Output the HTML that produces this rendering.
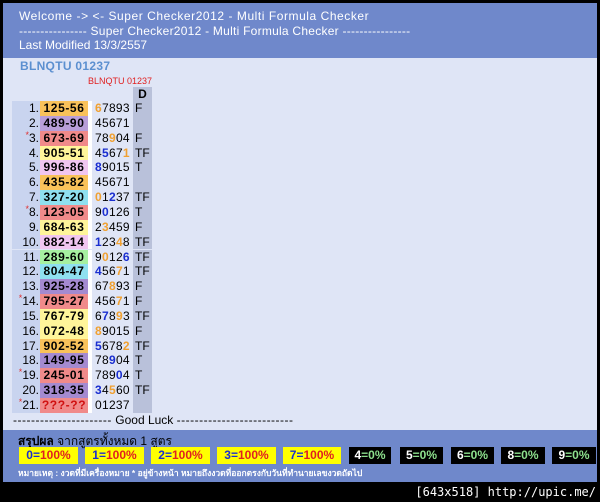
<!DOCTYPE html>
<html><head><meta charset="utf-8"><style>
*{margin:0;padding:0;box-sizing:border-box}
body{width:600px;height:502px;background:#000;position:relative;overflow:hidden;font-family:"Liberation Sans","DejaVu Sans","Noto Sans CJK SC",sans-serif;font-size:12px}
.frame{position:absolute;left:3px;top:3px;width:594px;height:479px;background:#dfe5f6}
.hdr{position:absolute;left:0;top:0;width:594px;height:55px;background:#6f88cb;color:#fff;padding:6px 0 0 16px;line-height:14.5px;font-size:12px}
.abs{position:absolute}
.row{position:absolute;left:9px;height:14.85px;line-height:14.85px;font-size:12px}
.num{position:absolute;left:0;width:28px;text-align:right;background:#c9d4ef;height:100%;padding-right:1px;color:#000}
.pair{position:absolute;left:28px;width:48px;height:100%;font-weight:bold;text-align:center;letter-spacing:.6px}
.gap{position:absolute;left:76px;width:4px;height:100%;background:#fff}
.dig{position:absolute;left:80px;width:41px;height:100%;padding-left:3px;background:#dfe5f6;letter-spacing:.3px}
.tf{position:absolute;left:123px;height:100%}
.dcol{position:absolute;left:121px;width:19px;height:100%;background:#b9c1da}
.o{color:#f0a030;font-weight:bold}.b{color:#1a2ed0;font-weight:bold}
.st{color:#e03030;font-size:9px;vertical-align:top;line-height:9px}
.foot{position:absolute;left:0;top:427px;width:594px;height:52px;background:#6f88cb}
.bd{position:absolute;top:17px;height:17px;line-height:17px;font-weight:bold;font-size:12px;text-align:center}
.y{background:#ffff00}.y i{font-style:normal;color:#1a2ed0}.y s{text-decoration:none;color:#e02020}
.k{background:#000;color:#fff}.k s{text-decoration:none;color:#8de08d}
</style></head><body>
<div class="frame">
<div class="hdr"><span style="letter-spacing:.55px">Welcome -&gt; &lt;- Super Checker2012 - Multi Formula Checker</span><br><span style="letter-spacing:.25px">---------------- Super Checker2012 - Multi Formula Checker ----------------</span><br>Last Modified 13/3/2557</div>
<div class="abs" style="left:17px;top:56px;font-weight:bold;color:#5b8fd0;font-size:12px;letter-spacing:.3px">BLNQTU 01237</div>
<div class="abs" style="left:85px;top:73px;color:#e02020;font-size:9px">BLNQTU 01237</div>
<div class="abs" style="left:130px;top:84px;width:19px;height:14px;background:#b9c1da;font-weight:bold;text-align:center;line-height:14px">D</div>
<div id="rows"></div>
<div class="abs" style="left:10px;top:410px;font-size:12px"><span style="letter-spacing:.5px">----------------------</span> Good Luck <span style="letter-spacing:.5px">--------------------------</span></div>
<div class="foot">
<div class="abs" style="left:15px;top:2px;font-size:12px;font-weight:bold;color:#000">สรุปผล <span style="font-weight:normal">จากสูตรทั้งหมด 1 สูตร</span></div>
<div class="bd y" style="left:16px;width:59px"><i>0=</i><s>100%</s></div>
<div class="bd y" style="left:82px;width:59px"><i>1=</i><s>100%</s></div>
<div class="bd y" style="left:148px;width:59px"><i>2=</i><s>100%</s></div>
<div class="bd y" style="left:214px;width:59px"><i>3=</i><s>100%</s></div>
<div class="bd y" style="left:280px;width:58px"><i>7=</i><s>100%</s></div>
<div class="bd k" style="left:346px;width:42px">4<s>=0%</s></div>
<div class="bd k" style="left:397px;width:43px">5<s>=0%</s></div>
<div class="bd k" style="left:448px;width:43px">6<s>=0%</s></div>
<div class="bd k" style="left:498px;width:44px">8<s>=0%</s></div>
<div class="bd k" style="left:549px;width:44px">9<s>=0%</s></div>
<div class="abs" style="left:15px;top:36px;font-size:8.5px;font-weight:bold;color:#fff">หมายเหตุ : งวดที่มีเครื่องหมาย * อยู่ข้างหน้า หมายถึงงวดที่ออกตรงกับวันที่ทำนายเลขงวดถัดไป</div>
</div>
</div>
<div class="abs" style="right:4px;top:485px;color:#fff;font-size:12px;font-family:'DejaVu Sans Mono',monospace">[643x518] http://upic.me/</div>
<script>
var O='#f9c25a',P='#b89ed8',R='#f08a8a',Y='#fff59a',K='#f1c6f0',C='#8fe0f0',G='#a6f0a0',Q='#a48ad0';
var d=[
['125-56',O,'<b class=o>6</b>7893','F',0],
['489-90',P,'45671','',0],
['673-69',R,'78<b class=o>9</b>04','F',1],
['905-51',Y,'4<b class=b>5</b>67<b class=o>1</b>','TF',0],
['996-86',K,'<b class=b>8</b>9015','T',0],
['435-82',O,'45671','',0],
['327-20',C,'<b class=o>0</b>1<b class=b>2</b>37','TF',0],
['123-05',R,'9<b class=b>0</b>126','T',1],
['684-63',Y,'2<b class=o>3</b>459','F',0],
['882-14',K,'<b class=b>1</b>23<b class=o>4</b>8','TF',0],
['289-60',G,'9<b class=o>0</b>12<b class=b>6</b>','TF',0],
['804-47',C,'<b class=b>4</b>56<b class=o>7</b>1','TF',0],
['925-28',Q,'67<b class=o>8</b>93','F',0],
['795-27',R,'456<b class=o>7</b>1','F',1],
['767-79',Y,'6<b class=b>7</b>8<b class=o>9</b>3','TF',0],
['072-48',Y,'<b class=o>8</b>9015','F',0],
['902-52',O,'<b class=b>5</b>678<b class=o>2</b>','TF',0],
['149-95',Q,'78<b class=b>9</b>04','T',0],
['245-01',R,'789<b class=b>0</b>4','T',1],
['318-35',Q,'<b class=b>3</b>4<b class=o>5</b>60','TF',0],
['???-??',R,'01237','',1]];
var h='';
d.forEach(function(r,i){
h+='<div class="row" style="top:'+(98+i*14.85)+'px;width:140px">'+
'<div class="num">'+(r[4]?'<span class=st>*</span>':'')+(i+1)+'.</div>'+
'<div class="pair" style="background:'+r[1]+(i==20?';color:#d01010':'')+'">'+r[0]+'</div>'+
'<div class="gap"></div><div class="dig">'+r[2]+'</div><div class="dcol"></div>'+
'<div class="tf">'+r[3]+'</div></div>';});
document.getElementById('rows').innerHTML=h;
</script>
</body></html>
